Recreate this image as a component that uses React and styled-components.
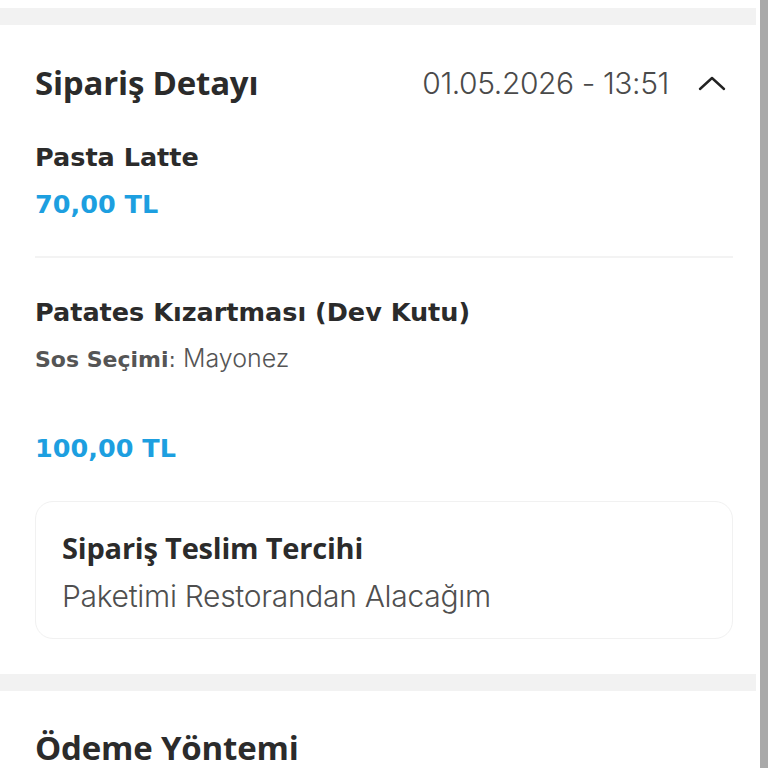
import styled, { createGlobalStyle } from 'styled-components'

const GlobalStyle = createGlobalStyle`
  html, body {
    margin: 0;
    padding: 0;
    background: #ffffff;
    overflow: hidden;
  }
  * { box-sizing: border-box; }
`

const items = [
  { id: 1, name: 'Pasta Latte', price: '70,00 TL' },
  {
    id: 2,
    name: 'Patates Kızartması (Dev Kutu)',
    option: { label: 'Sos Seçimi', value: 'Mayonez' },
    price: '100,00 TL',
  },
]

export default function App() {
  return (
    <>
      <GlobalStyle />
      <Screen>
        <Content>
          <TopGap />
          <Band />
          <Section>
            <Header>
              <Title>Sipariş Detayı</Title>
              <HeaderRight>
                <DateText>01.05.2026 - 13:51</DateText>
                <Chevron width="30" height="18" viewBox="0 0 30 18">
                  <path d="M3 15 L15 4 L27 15" fill="none" stroke="#222" strokeWidth="2.4" strokeLinecap="round" strokeLinejoin="round" />
                </Chevron>
              </HeaderRight>
            </Header>

            {items.map((item, i) => (
              <Item key={item.id} $last={i === items.length - 1}>
                <ItemName>{item.name}</ItemName>
                {item.option && (
                  <OptionLine>
                    <b>{item.option.label}</b>: <span>{item.option.value}</span>
                  </OptionLine>
                )}
                <Price $spaced={!!item.option}>{item.price}</Price>
              </Item>
            ))}

            <DeliveryBox>
              <BoxTitle>Sipariş Teslim Tercihi</BoxTitle>
              <BoxText>Paketimi Restorandan Alacağım</BoxText>
            </DeliveryBox>
          </Section>
          <Band />
          <PaymentSection>
            <PaymentTitle>Ödeme Yöntemi</PaymentTitle>
          </PaymentSection>
        </Content>
        <ScrollTrack />
      </Screen>
    </>
  )
}

const Screen = styled.div`
  display: flex;
  width: 768px;
  height: 768px;
  overflow: hidden;
  background: #ffffff;
`

const Content = styled.div`
  flex: 1;
  display: flex;
  flex-direction: column;
  min-height: 0;
`

const ScrollTrack = styled.div`
  width: 8px;
  flex-shrink: 0;
  background: #a9a9a9;
`

const TopGap = styled.div`
  height: 8px;
  flex-shrink: 0;
`

const Band = styled.div`
  height: 17px;
  flex-shrink: 0;
  background: #f2f2f2;
  margin-right: 4px;
`

const Section = styled.section`
  flex-shrink: 0;
  padding: 46px 27px 35px 35px;
`

const PaymentSection = styled.section`
  flex-shrink: 0;
  padding: 41px 27px 0 35px;
`

const Header = styled.div`
  display: flex;
  align-items: center;
  justify-content: space-between;
  height: 24px;
  margin-bottom: 46px;
`

const Title = styled.h2`
  margin: 0;
  font-family: "Open Sans", sans-serif;
  font-weight: 700;
  font-size: 33px;
  line-height: 24px;
  color: #2b2b2b;
  letter-spacing: -0.2px;
`

const PaymentTitle = styled(Title)`
  line-height: 32px;
`

const HeaderRight = styled.div`
  display: flex;
  align-items: center;
  gap: 28px;
  margin-right: 6px;
`

const DateText = styled.span`
  font-family: Inter, sans-serif;
  font-weight: 300;
  font-size: 30px;
  color: #4a4a4a;
  letter-spacing: -0.4px;
`

const Chevron = styled.svg`
  display: block;
`

const Item = styled.div`
  padding: 0 0 ${(p) => (p.$last ? '37px' : '36px')} 0;
  border-bottom: ${(p) => (p.$last ? 'none' : '2px solid #f3f3f3')};
  & + & {
    padding-top: 38px;
  }
`

const ItemName = styled.div`
  font-family: "DejaVu Sans", sans-serif;
  font-weight: 700;
  font-size: 25.5px;
  line-height: 32px;
  color: #2b2b2b;
`

const OptionLine = styled.div`
  margin-top: 16px;
  font-family: "DejaVu Sans", sans-serif;
  font-size: 22px;
  line-height: 28px;
  color: #555;
  b {
    font-weight: 700;
  }
  span {
    font-family: Inter, sans-serif;
    font-weight: 300;
    font-size: 25px;
  }
`

const Price = styled.div`
  margin-top: ${(p) => (p.$spaced ? '58px' : '15px')};
  font-family: "DejaVu Sans", sans-serif;
  font-weight: 700;
  font-size: 25.5px;
  line-height: 32px;
  color: #1d9fe0;
`

const DeliveryBox = styled.div`
  border: 1.5px solid #f1f1f1;
  border-radius: 18px;
  padding: 30px 26px 26px;
`

const BoxTitle = styled.div`
  font-family: "Open Sans", sans-serif;
  font-weight: 700;
  font-size: 29px;
  line-height: 32px;
  color: #2b2b2b;
  letter-spacing: -0.2px;
`

const BoxText = styled.div`
  margin-top: 16px;
  font-family: Inter, sans-serif;
  font-weight: 300;
  font-size: 30px;
  line-height: 32px;
  color: #4f4f4f;
  letter-spacing: -0.3px;
`
